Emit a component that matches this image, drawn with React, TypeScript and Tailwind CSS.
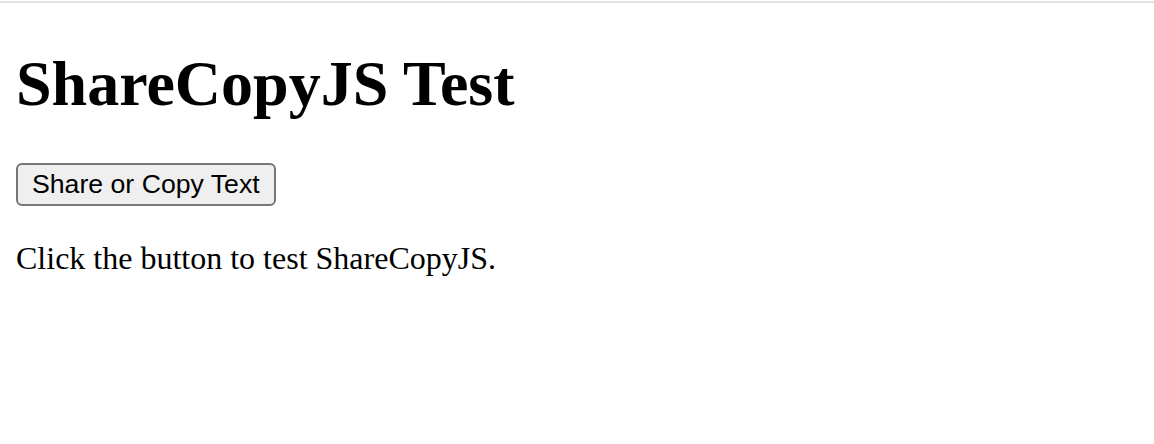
export default function App() {
  return (
    <div className="min-h-[444px] bg-white text-black">
      <div className="h-[3px] border-t border-white bg-[#e2e2e2]" />
      <div className="px-4 pt-[45px]" style={{ fontFamily: '"Liberation Serif", "Times New Roman", serif' }}>
        <h1 className="text-[64px] font-bold leading-[71px]">ShareCopyJS Test</h1>
        <div className="mt-[44px]">
          <button
            type="button"
            className="h-[43px] rounded-[6px] border-2 border-[#767676] bg-[#efefef] px-[14px] text-[26.67px] leading-none text-black"
            style={{ fontFamily: '"Liberation Sans", Arial, sans-serif' }}
          >
            Share or Copy Text
          </button>
        </div>
        <p className="mt-[35px] text-[32px] leading-[35px]">Click the button to test ShareCopyJS.</p>
      </div>
    </div>
  );
}
